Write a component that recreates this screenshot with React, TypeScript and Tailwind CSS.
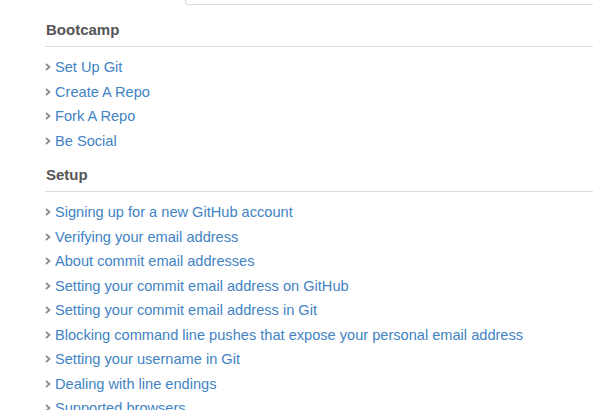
import React from 'react';

const sections = [
  {
    title: 'Bootcamp',
    items: ['Set Up Git', 'Create A Repo', 'Fork A Repo', 'Be Social'],
  },
  {
    title: 'Setup',
    items: [
      'Signing up for a new GitHub account',
      'Verifying your email address',
      'About commit email addresses',
      'Setting your commit email address on GitHub',
      'Setting your commit email address in Git',
      'Blocking command line pushes that expose your personal email address',
      'Setting your username in Git',
      'Dealing with line endings',
      'Supported browsers',
    ],
  },
];

function Chevron() {
  return (
    <svg width="6" height="8" viewBox="0 0 6 8" className="shrink-0">
      <path d="M1 1 L4.5 4 L1 7" fill="none" stroke="#8a8a8a" strokeWidth="1.7" />
    </svg>
  );
}

export default function App() {
  return (
    <div className="w-[593px] h-[410px] overflow-hidden bg-white font-['Liberation_Sans',Arial,sans-serif]">
      <div className="ml-[185px] h-[5px] border-l border-b border-[#ddd] rounded-bl-[3px]" />
      <div className="pl-[45px]">
        {sections.map((s, i) => (
          <div key={s.title} className={i === 0 ? 'mt-[15px]' : 'mt-[12px]'}>
            <h3 className="text-[15px] leading-[20px] font-bold text-[#555] pl-px pb-[6px] border-b border-[#ddd]">
              {s.title}
            </h3>
            <ul className="pt-[8px]">
              {s.items.map((it) => (
                <li key={it} className="flex items-center gap-[4px] leading-[24.5px] text-[14.6px] whitespace-nowrap">
                  <Chevron />
                  <a className="text-[#4183c4]">{it}</a>
                </li>
              ))}
            </ul>
          </div>
        ))}
      </div>
    </div>
  );
}
